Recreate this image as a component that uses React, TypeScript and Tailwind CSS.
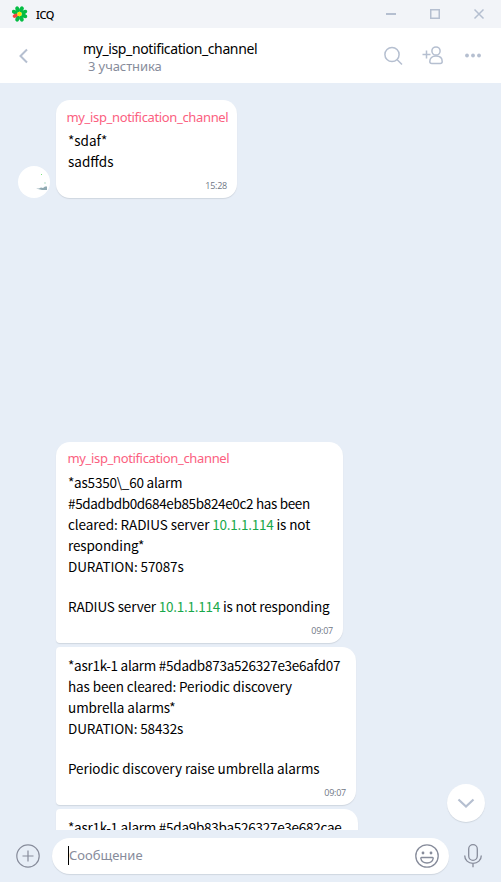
import type { ReactNode } from 'react';

const CHANNEL = 'my_isp_notification_channel';

function Line({ children, className = '' }: { children?: ReactNode; className?: string }) {
  return <div className={`h-[21px] whitespace-pre ${className}`}>{children}</div>;
}

function Ip() {
  return <span className="tracking-[-0.25px] text-[#18a84a]">10.1.1.114</span>;
}

function Bubble({ className, time, children }: { className: string; time?: string; children: ReactNode }) {
  return (
    <div className={`flex shrink-0 flex-col bg-white pl-3 text-[13.5px] leading-[21px] text-black shadow-[0_1px_1px_#cfd6df] ${className}`}>
      {children}
      {time && (
        <div className="mt-auto self-end pr-[10px] pb-[6px] font-['Open_Sans',sans-serif] text-[9px] leading-[12px] tracking-[-0.25px] text-[#707785]">
          {time}
        </div>
      )}
    </div>
  );
}

function Author({ className }: { className: string }) {
  return (
    <div className={`h-[21px] font-['Noto_Sans',sans-serif] text-[13px] leading-[21px] tracking-[-0.35px] whitespace-nowrap text-[#fb6080] ${className}`}>
      {CHANNEL}
    </div>
  );
}

function Logo() {
  return (
    <svg width="16" height="16" viewBox="0 0 16 16">
      {[22.5, 67.5, 112.5, 157.5, 202.5, 292.5, 337.5].map((a) => (
        <ellipse key={a} cx="7.5" cy="2.9" rx="2" ry="3.1" fill="#04bd43" transform={`rotate(${a} 7.5 8)`} />
      ))}
      <ellipse cx="7.5" cy="3.4" rx="1.9" ry="2.7" fill="#f7443e" transform="rotate(247.5 7.5 8)" />
      <circle cx="7.5" cy="8" r="2.2" fill="#ffdf00" />
    </svg>
  );
}

export default function App() {
  return (
    <div className="flex h-[882px] w-[501px] flex-col overflow-hidden bg-[#e7eef7] font-['Noto_Sans_CJK_SC',sans-serif]">
      <div className="flex h-7 shrink-0 items-center bg-[#f2f4f8] pl-3">
        <Logo />
        <span className="ml-2 pt-[2px] font-['Noto_Sans',sans-serif] text-[11px] leading-4 font-medium tracking-[-0.4px] text-black">ICQ</span>
        <svg className="ml-auto" width="128" height="28" fill="none" stroke="#b5bfd0">
          <path d="M13 14H23" strokeWidth="2" />
          <rect x="57.75" y="9.75" width="8.5" height="8.5" strokeWidth="1.5" />
          <path d="M101.5 9.5l9 9M110.5 9.5l-9 9" strokeWidth="1.5" />
        </svg>
      </div>

      <header className="flex h-[55px] shrink-0 bg-white">
        <svg width="83" height="55" fill="none" stroke="#b5bfd0" strokeWidth="2">
          <path d="M27 21.5L20.5 28L27 34.5" />
        </svg>
        <div className="pt-[11px] whitespace-nowrap">
          <div className="h-[19px] font-['Noto_Sans',sans-serif] text-[14px] leading-5 tracking-[-0.38px] text-black">{CHANNEL}</div>
          <div className="ml-[5px] font-['Noto_Sans',sans-serif] text-[13px] leading-4 tracking-[-0.1px] text-[#878c9b]">3 участника</div>
        </div>
        <svg className="ml-auto" width="121" height="55" fill="none" stroke="#b5bfd0" strokeWidth="1.5">
          <circle cx="12" cy="26.5" r="7.1" />
          <path d="M17 31.5l5 5" />
          <path d="M42.5 26.5h8M46.5 22.5v8" />
          <circle cx="56" cy="23" r="4.1" />
          <path d="M49.8 33.5c0-3.4 2.3-5.4 6.2-5.4s6.2 2 6.2 5.4c0 1.7-.8 2-2 2h-8.4c-1.2 0-2-.3-2-2z" />
          <g fill="#b5bfd0" stroke="none">
            <circle cx="87" cy="27.5" r="1.9" />
            <circle cx="93" cy="27.5" r="1.9" />
            <circle cx="99" cy="27.5" r="1.9" />
          </g>
        </svg>
      </header>

      <main className="relative h-[747px] shrink-0 overflow-hidden pt-[17px]">
        <div className="flex h-[98px] items-end pl-[18px]">
          <div className="mr-[6px] h-8 w-8 rounded-full bg-white">
            <svg width="32" height="32">
              <path d="M18 22.5h3l2-1 2 .5 2-1.500h2v3.500h-5z" fill="#8fa9b2" />
              <path d="M26 16h2v2h-2z" fill="#d9efe3" />
              <path d="M23 8h1v1h-1z" fill="#7be47c" />
            </svg>
          </div>
          <Bubble className="h-[98px] w-[181px] rounded-[14px] pt-[7px]" time="15:28">
            <Author className="-ml-[1.5px]" />
            <Line className="mt-[2px]">*sdaf*</Line>
            <Line>sadffds</Line>
          </Bubble>
        </div>

        <div className="mt-[244px] flex flex-col gap-1 pl-[56px]">
          <Bubble className="h-[201px] w-[287px] rounded-[14px] rounded-bl-[4px] pt-[6px]" time="09:07">
            <Author className="-ml-[0.5px]" />
            <Line className="mt-[3px] tracking-[-0.21px]">*as5350\_60 alarm</Line>
            <Line className="tracking-[-0.34px]">#5dadbdb0d684eb85b824e0c2 has been</Line>
            <Line className="tracking-[-0.08px]">cleared: RADIUS server <Ip /> is not</Line>
            <Line className="tracking-[-0.1px]">responding*</Line>
            <Line className="tracking-[-0.1px]">DURATION: 57087s</Line>
            <div className="h-[19px]" />
            <Line className="tracking-[-0.14px]">RADIUS server <Ip /> is not responding</Line>
          </Bubble>
          <Bubble className="h-[158px] w-[300px] rounded-[14px] rounded-l-[4px] pt-[8px]" time="09:07">
            <Line className="tracking-[-0.26px]">*asr1k-1 alarm #5dadb873a526327e3e6afd07</Line>
            <Line className="tracking-[-0.11px]">has been cleared: Periodic discovery</Line>
            <Line className="tracking-[-0.06px]">umbrella alarms*</Line>
            <Line className="tracking-[-0.13px]">DURATION: 58432s</Line>
            <div className="h-[19px]" />
            <Line className="tracking-[-0.06px]">Periodic discovery raise umbrella alarms</Line>
          </Bubble>
          <Bubble className="h-[158px] w-[302px] rounded-[14px] rounded-l-[4px] pt-[8px]">
            <Line className="tracking-[-0.26px]">*asr1k-1 alarm #5da9b83ba526327e3e682cae</Line>
          </Bubble>
        </div>

        <button className="absolute top-[701px] left-[447px] flex h-[38px] w-[38px] items-center justify-center rounded-full bg-white shadow-[0_1px_1px_#cfd6df]">
          <svg width="18" height="12" fill="none" stroke="#b5bfd0" strokeWidth="2.2">
            <path d="M1.5 2.5L9 9.5L16.5 2.5" />
          </svg>
        </button>
      </main>

      <footer className="flex h-[52px] shrink-0 pt-2">
        <svg width="52" height="36" fill="none" stroke="#878c9b" strokeWidth="1.2">
          <circle cx="28" cy="18" r="11.2" />
          <path d="M22.5 18h11M28 12.5v11" />
        </svg>
        <div className="flex h-9 w-[397px] items-center rounded-full bg-white pl-4 shadow-[0_1px_1px_#cfd6df]">
          <div className="mb-[2px] h-[19px] w-px bg-black" />
          <span className="mb-[2px] font-['Noto_Sans',sans-serif] text-[13px] leading-5 text-[#878c9b]">Сообщение</span>
          <svg className="mr-[10px] ml-auto" width="24" height="24" fill="none" stroke="#878c9b" strokeWidth="1.3">
            <circle cx="12" cy="12" r="11.2" />
            <path d="M6.5 13.5h11c.6 0 .8.4.7.9-.5 2.9-2.8 4.600-6.200 4.600s-5.700-1.700-6.200-4.600c-.1-.5.1-.9.7-.9z" />
            <circle cx="8" cy="9" r="1.4" fill="#878c9b" stroke="none" />
            <circle cx="16" cy="9" r="1.4" fill="#878c9b" stroke="none" />
          </svg>
        </div>
        <svg width="52" height="36" fill="none" stroke="#878c9b" strokeWidth="1.3">
          <rect x="19.7" y="6.7" width="8.6" height="15.6" rx="4.3" />
          <path d="M15.7 17.5c0 4.6 3.5 7.8 8.3 7.8s8.3-3.2 8.3-7.8M24 25.3v4" />
        </svg>
      </footer>
    </div>
  );
}
